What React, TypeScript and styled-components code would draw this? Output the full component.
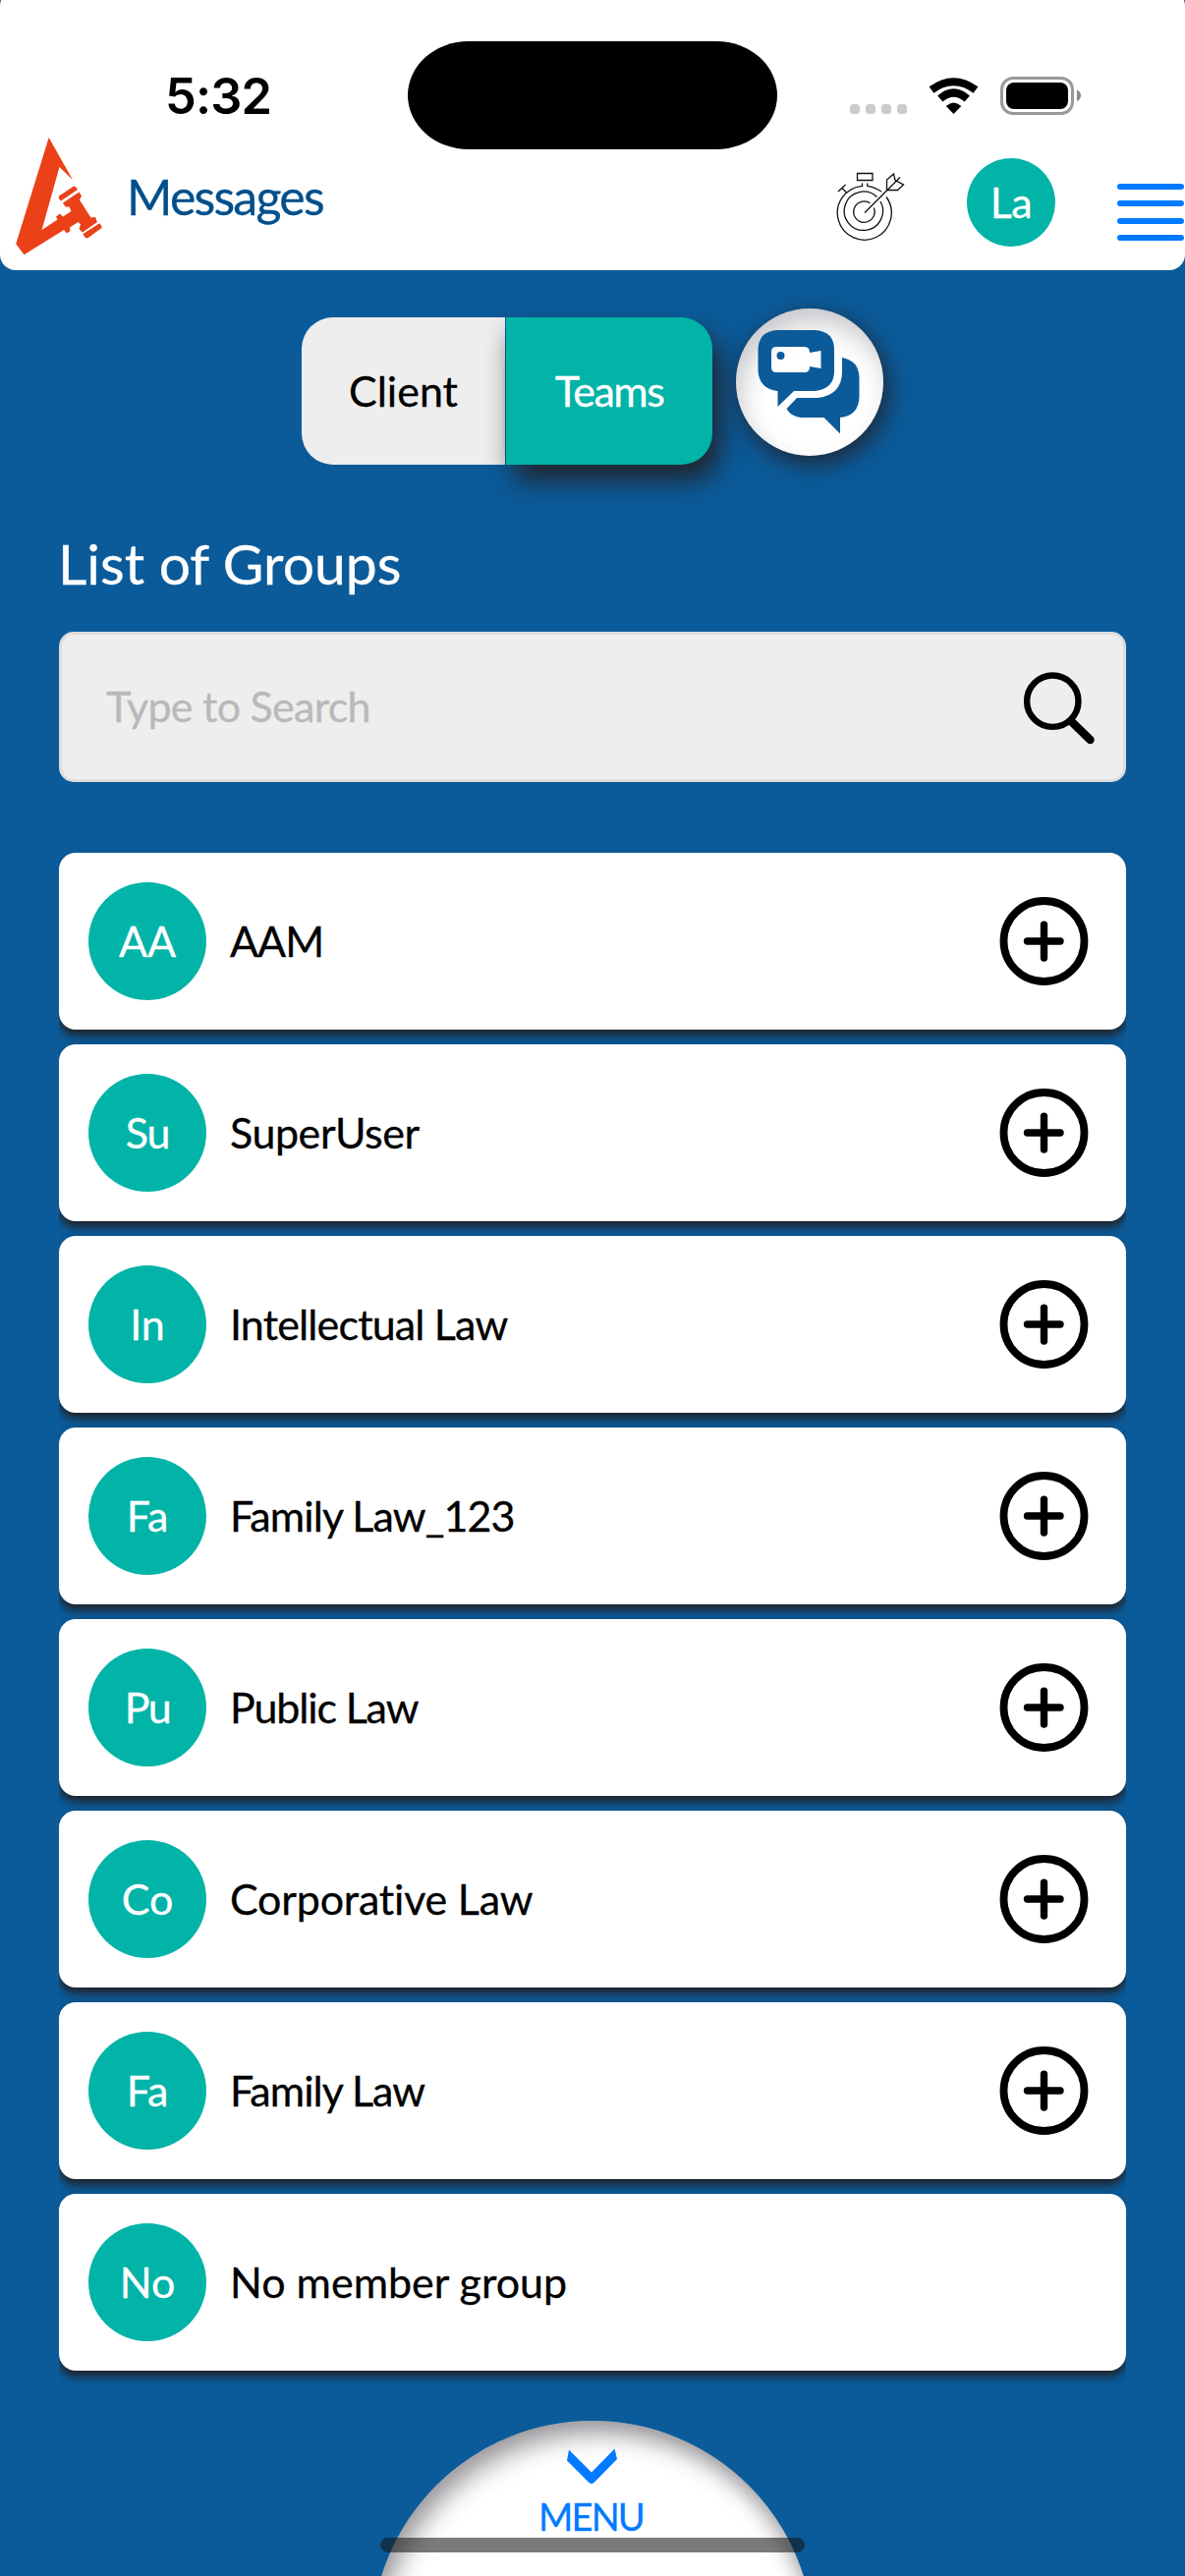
import React from "react";
import styled, { createGlobalStyle } from "styled-components";

const blue = "#0b5b9a";
const teal = "#02b3a8";
const iosBlue = "#007bff";

const Global = createGlobalStyle`
  * { box-sizing: border-box; }
  body { margin: 0; background: ${blue}; font-family: "Gill Sans", Lato, "Open Sans", sans-serif; }
`;

const Screen = styled.div`
  position: relative;
  width: 1206px;
  height: 2622px;
  overflow: hidden;
  background: ${blue};
  display: flex;
  flex-direction: column;
`;

const Header = styled.header`
  flex: none;
  height: 285px;
  margin-top: -10px;
  padding-top: 10px;
  background: #fff;
  border-radius: 16px;
  overflow: hidden;
`;

const StatusBar = styled.div`
  height: 140px;
  display: grid;
  grid-template-columns: 415px 376px 1fr;
  align-items: start;
`;

const Clock = styled.div`
  padding: 66px 0 0 168px;
  font: 600 50.5px/64px Inter, sans-serif;
  letter-spacing: -0.8px;
  color: #000;
`;

const Island = styled.div`
  margin-top: 42px;
  height: 110px;
  border-radius: 62px / 55px;
  background: #000;
`;

const StatusIcons = styled.div`
  padding: 77px 0 0 73px;
`;

const TitleBar = styled.div`
  height: 135px;
  display: flex;
  align-items: flex-start;
`;

const Logo = styled.svg`
  flex: none;
`;

const Label = styled.span<{ $size: number; $spacing?: number; $color?: string }>`
  display: block;
  padding-bottom: 2px;
  font-size: ${(p) => p.$size}px;
  line-height: ${(p) => p.$size}px;
  letter-spacing: ${(p) => p.$spacing ?? 0}px;
  font-variant-ligatures: none;
  -webkit-text-stroke: 0.3px currentColor;
  color: ${(p) => p.$color ?? "#000"};
  white-space: pre;
`;

const PageTitle = styled.div`
  flex: none;
  margin: 35px 0 0 9px;
  width: 721px;
`;

const Avatar = styled.div<{ $size: number }>`
  flex: none;
  width: ${(p) => p.$size}px;
  height: ${(p) => p.$size}px;
  border-radius: 50%;
  background: ${teal};
  display: flex;
  align-items: center;
  justify-content: center;
`;

const Burger = styled.div`
  margin: 47px 0 0 63px;
  width: 68px;
  display: grid;
  gap: 11.7px;
`;

const BurgerLine = styled.i`
  height: 5.8px;
  border-radius: 3px;
  background: ${iosBlue};
`;

const TargetIcon = styled.svg`
  flex: none;
  margin: 34px 62px 0 0;
`;

const AccountAvatar = styled.div`
  margin-top: 21px;
`;

const Switcher = styled.div`
  height: 150px;
  margin: 48px 0 0 307px;
  display: flex;
`;

const Tab = styled.button<{ $active?: boolean }>`
  width: ${(p) => (p.$active ? 210 : 207)}px;
  height: 150px;
  padding: 0;
  margin-left: ${(p) => (p.$active ? 1 : 0)}px;
  border: 0;
  font-family: inherit;
  background: ${(p) => (p.$active ? teal : "#eee")};
  border-radius: ${(p) => (p.$active ? "0 32px 32px 0" : "32px 0 0 32px")};
  box-shadow: ${(p) => (p.$active ? "8px 16px 28px -1px rgba(35,31,32,.95)" : "none")};
`;

const VideoChat = styled.button`
  width: 150px;
  height: 150px;
  margin: -9px 0 0 24px;
  padding: 0;
  border: 0;
  border-radius: 50%;
  background: #fff;
  box-shadow: 4px 8px 24px rgba(35, 31, 32, .85), inset 6px 16px 26px -2px rgba(35, 31, 50, .25);
  display: flex;
`;

const Heading = styled.h1`
  margin: 71px 0 0 59px;
  height: 60px;
  font-weight: 400;
  display: flex;
  align-items: center;
`;

const SearchBox = styled.div`
  flex: none;
  margin: 39px 60px 0;
  height: 153px;
  padding: 0 28px 0 45px;
  border: 3px solid #ddd;
  border-radius: 15px;
  background: #eee;
  display: flex;
  align-items: center;
  justify-content: space-between;
`;

const List = styled.div`
  flex: none;
  margin: 59px 60px 0;
  padding: 13px 0 25px;
  overflow: hidden;
  display: flex;
  flex-direction: column;
  gap: 15px;
`;

const Row = styled.div`
  height: 180px;
  padding: 0 38px 0 30px;
  border-radius: 17px;
  background: #fff;
  box-shadow: 0 6px 10px rgba(35, 31, 32, .95);
  display: flex;
  align-items: center;
`;

const RowName = styled.div`
  flex: 1;
  padding-left: 24px;
`;

const MenuDome = styled.div`
  position: absolute;
  left: 378px;
  top: 2464px;
  width: 450px;
  height: 450px;
  border-radius: 50%;
  background: #fff;
  box-shadow: inset 8px 14px 24px rgba(35, 31, 40, .42), inset -6px 0 20px rgba(35, 31, 40, .14);
  display: flex;
  flex-direction: column;
  align-items: center;
  padding-top: 28px;
`;

const MenuLabel = styled.div`
  margin: 12px 3px 0 0;
`;

const HomeIndicator = styled.div`
  position: absolute;
  left: 387px;
  top: 2583px;
  width: 432px;
  height: 15px;
  border-radius: 8px;
  background: rgba(20, 20, 20, .56);
`;

type Group = { initials: string; tight?: number; name: string; spacing: number; add: boolean };

const groups: Group[] = [
  { initials: "AA", name: "AAM", spacing: -1, add: true },
  { initials: "Su", tight: -1.3, name: "SuperUser", spacing: -0.45, add: true },
  { initials: "In", name: "Intellectual Law", spacing: -0.85, add: true },
  { initials: "Fa", name: "Family Law_123", spacing: -0.9, add: true },
  { initials: "Pu", tight: -1.5, name: "Public Law", spacing: -1.15, add: true },
  { initials: "Co", name: "Corporative Law", spacing: -0.2, add: true },
  { initials: "Fa", name: "Family Law", spacing: -0.95, add: true },
  { initials: "No", name: "No member group", spacing: 0, add: false },
];

const PlusCircle = () => (
  <svg width="92" height="92" viewBox="0 0 92 92" fill="none" stroke="#000">
    <circle cx="46.5" cy="46" r="41" strokeWidth="7.8" />
    <path d="M46.500 29.200V63M29.500 46H63" strokeWidth="7.4" strokeLinecap="round" />
  </svg>
);

export default function App() {
  return (
    <Screen>
      <Global />
      <Header>
        <StatusBar>
          <Clock>5:32</Clock>
          <Island />
          <StatusIcons>
            <svg width="240" height="44" viewBox="864 77 240 44">
              {[865, 881, 897, 913].map((x) => (
                <rect key={x} x={x} y="106" width="10" height="10" rx="3.500" fill="#cbcbcb" />
              ))}
              <g fill="none" stroke="#000" strokeWidth="8">
                <path d="M948 91.500Q970.500 75 993 91.500" />
                <path d="M956.800 100.500Q970.500 88.500 984.300 100.500" />
              </g>
              <path d="M962.800 108Q970.500 101 978.300 108L970.500 116Z" />
              <rect x="1019.500" y="79.500" width="72" height="36" rx="11.500" fill="none" stroke="#9a9a9a" strokeWidth="3" />
              <rect x="1024" y="84" width="63" height="27" rx="8" />
              <path d="M1096 91.500Q1100 93.500 1100 97.200T1096 103Z" fill="#8a8a8a" />
            </svg>
          </StatusIcons>
        </StatusBar>
        <TitleBar>
          <Logo width="120" height="135" viewBox="0 140 120 135" fill="#ea4119">
            <path d="M49.700 140L74 183L60.500 170L42.600 234L58.500 223.500L57 220.500L61 217.500L64 220.500L72.500 215L70.500 210.500L66.500 210.500L64 206.500L80.500 195.500L83 199.500L81 203.500L92.500 221.500L97 221L99 226L84 236.500L80.500 233L82 228.500L79.500 226L71 231.500L71.500 235L68 237.500L65 234L24.500 259.300L16.200 248.300Z" />
            <path d="M60 199.500L75 189.500Q77 189 79 193L62 204.500Q59 202 60 199.500ZM84.500 238L101 227.500Q104 229.500 103.500 232L89 242.500Q86.500 243 84.500 238Z" />
          </Logo>
          <PageTitle><Label $size={50} $spacing={-1.75} $color="#004f8b">Messages</Label></PageTitle>
          <TargetIcon width="72" height="72" viewBox="850 174 72 72" fill="none" stroke="#111" strokeWidth="1.300">
            <path d="M877.500 186.500V189.300A27.500 27.500 0 1 0 902 200.500M882.800 186.500V189.300Q890.500 190.500 897 195" />
            <path d="M892.500 200.500A19.700 19.700 0 1 0 896 205M885.500 206.800A10.700 10.700 0 1 0 889.300 211.500" />
            <path d="M872.500 176.500H888V183.500H872.500ZM853 195L860.500 188M857 191.500L862 196.500M880 216.500L916 180.500M902.500 193.500V183L909.500 177L911 183.500L919.500 188L913.500 193.500Z" />
          </TargetIcon>
          <AccountAvatar>
            <Avatar $size={90}><Label $size={43} $spacing={-0.6} $color="#fff">La</Label></Avatar>
          </AccountAvatar>
          <Burger><BurgerLine /><BurgerLine /><BurgerLine /><BurgerLine /></Burger>
        </TitleBar>
      </Header>

      <Switcher>
        <Tab><Label $size={43}>Client</Label></Tab>
        <Tab $active><Label $size={43} $spacing={-1.5} $color="#fff">Teams</Label></Tab>
        <VideoChat>
          <svg width="150" height="150" viewBox="749 314 150 150" fill={blue}>
            <path fillRule="evenodd" d="M791 336H829Q849 337 849 356V378Q849 396 829 398H808L791.500 414V398Q773 396 771.500 378V356Q772 337 791 336ZM790 353Q785 353 785 358V374Q785 379 790 379H819Q824 379 824 373L835.500 375V357L824 359Q824 353 819 353Z" />
            <circle cx="794.500" cy="362" r="4" />
            <path d="M857 364Q874 367 874.500 384V404Q874 423 855 425V441.500L838.500 425H815Q805 424 800.500 416L811 405H832Q857 402 857 378Z" />
          </svg>
        </VideoChat>
      </Switcher>

      <Heading><Label $size={57} $color="#fff">List of Groups</Label></Heading>

      <SearchBox>
        <Label $size={43} $spacing={-0.72} $color="#b9b9ba">Type to Search</Label>
        <svg width="76" height="76" viewBox="1039 681 76 76" fill="none" stroke="#000">
          <circle cx="1071.300" cy="712.700" r="26.200" strokeWidth="6.400" />
          <path d="M1091 734L1109.500 752" strokeWidth="8.500" strokeLinecap="round" />
        </svg>
      </SearchBox>

      <List>
        {groups.map((g) => (
          <Row key={g.name}>
            <Avatar $size={120}><Label $size={43} $spacing={g.tight} $color="#fff">{g.initials}</Label></Avatar>
            <RowName><Label $size={43} $spacing={g.spacing}>{g.name}</Label></RowName>
            {g.add && <PlusCircle />}
          </Row>
        ))}
      </List>

      <MenuDome>
        <svg width="52" height="38" viewBox="577 2492 52 38" fill={iosBlue}>
          <path d="M579 2493.500L602 2516.500L625.500 2492.500L628 2503L604.500 2527Q602 2529 599.500 2527L577 2504.500Z" />
        </svg>
        <MenuLabel><Label $size={38} $spacing={-1.8} $color={iosBlue}>MENU</Label></MenuLabel>
      </MenuDome>
      <HomeIndicator />
    </Screen>
  );
}
